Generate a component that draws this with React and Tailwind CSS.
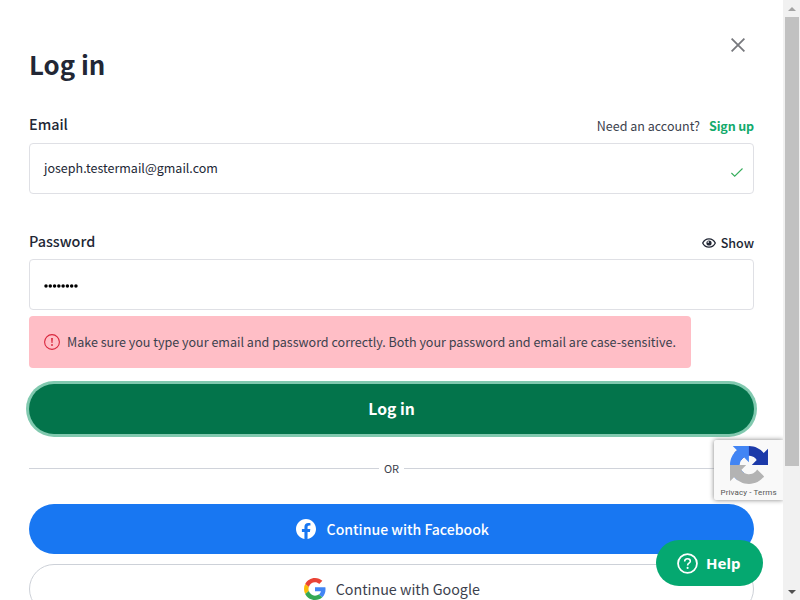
import React from "react";

function RecaptchaLogo() {
  return (
    <svg viewBox="0 0 64 64" className="block h-[38px] w-[38px]">
      <path fill="#1C3AA9" d="M64 31.955l-.033-1.37V4.687l-7.16 7.16C50.948 4.674 42.033.093 32.05.093c-10.4 0-19.622 4.96-25.458 12.64l11.736 11.86a15.55 15.55 0 0 1 4.754-5.334c2.05-1.6 4.952-2.906 8.968-2.906.485 0 .86.057 1.135.163 4.976.393 9.288 3.14 11.828 7.124l-8.307 8.307L64 31.953" />
      <path fill="#4285F4" d="M31.862.094l-1.37.033H4.594l7.16 7.16C4.58 13.147 0 22.06 0 32.046c0 10.4 4.96 19.622 12.64 25.458L24.5 45.768a15.55 15.55 0 0 1-5.334-4.754c-1.6-2.05-2.906-4.952-2.906-8.968 0-.485.057-.86.163-1.135.393-4.976 3.14-9.288 7.124-11.828l8.307 8.307L31.86.095" />
      <path fill="#B3B3B3" d="M.001 32.045l.033 1.37v25.898l7.16-7.16c5.86 7.173 14.774 11.754 24.76 11.754 10.4 0 19.622-4.96 25.458-12.64l-11.736-11.86a15.55 15.55 0 0 1-4.754 5.334c-2.05 1.6-4.952 2.906-8.968 2.906-.485 0-.86-.057-1.135-.163-4.976-.393-9.288-3.14-11.828-7.124l8.307-8.307c-10.522.04-22.4.066-27.295-.005" />
    </svg>
  );
}

function GoogleLogo() {
  return (
    <svg viewBox="0 0 48 48" className="block h-[22px] w-[22px]">
      <path fill="#EA4335" d="M24 9.5c3.54 0 6.71 1.22 9.21 3.6l6.85-6.85C35.9 2.38 30.47 0 24 0 14.62 0 6.51 5.38 2.56 13.22l7.98 6.19C12.43 13.72 17.74 9.5 24 9.5z" />
      <path fill="#4285F4" d="M46.98 24.55c0-1.57-.15-3.09-.38-4.55H24v9.02h12.94c-.58 2.96-2.26 5.48-4.78 7.18l7.73 6c4.51-4.18 7.09-10.36 7.09-17.65z" />
      <path fill="#FBBC05" d="M10.53 28.59c-.48-1.45-.76-2.99-.76-4.59s.27-3.14.76-4.59l-7.98-6.19C.92 16.46 0 20.12 0 24c0 3.88.92 7.54 2.56 10.78l7.97-6.19z" />
      <path fill="#34A853" d="M24 48c6.48 0 11.93-2.13 15.89-5.81l-7.73-6c-2.15 1.45-4.92 2.3-8.16 2.3-6.26 0-11.57-4.22-13.47-9.91l-7.98 6.19C6.51 42.62 14.62 48 24 48z" />
    </svg>
  );
}

function Scrollbar() {
  return (
    <div className="flex w-[17px] shrink-0 flex-col items-center bg-[#f1f1f1]">
      <div className="flex h-[17px] items-center">
        <svg viewBox="0 0 8 4" className="h-1 w-2"><path d="M4 0L8 4H0z" fill="#a3a3a3" /></svg>
      </div>
      <div className="h-[449px] w-[14px] bg-[#c1c1c1]" />
      <div className="mt-auto flex h-[17px] items-center">
        <svg viewBox="0 0 8 4" className="h-1 w-2"><path d="M0 0H8L4 4z" fill="#505050" /></svg>
      </div>
    </div>
  );
}

export default function App() {
  return (
    <div className="relative flex h-[600px] w-[800px] overflow-hidden bg-white font-['Noto_Sans_CJK_SC',sans-serif] text-[#222735]">
      <main className="flex h-[640px] min-w-0 flex-1 flex-col px-[29px]">
        <header className="flex h-[114px] items-start justify-between">
          <h1 className="mt-[44px] text-[25.8px] leading-[40px] font-bold">Log in</h1>
          <svg viewBox="0 0 14 14" className="mt-[38px] mr-[8.6px] h-3.5 w-3.5">
            <path d="M.6.6l12.8 12.8M13.4.6L.6 13.4" stroke="#77787d" strokeWidth="1.8" fill="none" />
          </svg>
        </header>

        <div className="flex h-[29px] items-start justify-between">
          <label className="text-[14.4px] leading-5 font-medium">Email</label>
          <div className="mt-0.5 flex gap-[9px] text-[12.5px] leading-5">
            <span className="text-[#3c414d]">Need an account?</span>
            <a className="font-bold tracking-[-0.13px] text-[#13aa6c]">Sign up</a>
          </div>
        </div>
        <div className="flex h-[51px] shrink-0 items-center justify-between rounded-[4px] border border-[#dfe0e5] pr-[10.5px] pl-3.5">
          <span className="-mt-0.5 text-[12.5px] leading-5">joseph.testermail@gmail.com</span>
          <svg viewBox="0 0 12 9" className="mt-2 h-[9px] w-3">
            <path d="M.4 5l3.3 3.2L11.5.5" stroke="#36ad5c" strokeWidth="1.1" fill="none" />
          </svg>
        </div>

        <div className="mt-[37px] flex h-7 items-start justify-between">
          <label className="text-[14.4px] leading-5 font-medium">Password</label>
          <div className="mt-0.5 flex items-center gap-[5px] text-[12.5px] leading-5 font-medium">
            <svg viewBox="0 0 14 10" className="h-2.5 w-3.5">
              <path d="M.7 5C2 2.2 4.2.8 7 .8S12 2.2 13.3 5C12 7.8 9.8 9.2 7 9.2S2 7.8.7 5z" fill="none" stroke="#222735" strokeWidth="1.3" />
              <circle cx="7" cy="5" r="2.6" fill="#222735" />
              <circle cx="6.2" cy="4.1" r=".8" fill="#fff" />
            </svg>
            <span>Show</span>
          </div>
        </div>
        <div className="flex h-[51px] shrink-0 items-center rounded-[4px] border border-[#dfe0e5] px-3.5">
          <svg viewBox="0 0 36 4" className="mt-[3px] h-1 w-9">
            {Array.from({ length: 8 }, (_, i) => (
              <circle key={i} cx={2 + i * 4.28} cy="2" r="1.75" fill="#000" />
            ))}
          </svg>
        </div>

        <div className="mt-1.5 flex h-[52px] w-[661.5px] shrink-0 items-center gap-[7px] rounded-[4px] bg-[#ffbec6] pl-[15px]">
          <svg viewBox="0 0 16 16" className="h-4 w-4 shrink-0">
            <circle cx="8" cy="8" r="7.4" fill="none" stroke="#d9263c" strokeWidth="1.1" />
            <path d="M7.1 4h1.8l-.4 5h-1z" fill="#d9263c" />
            <circle cx="8" cy="11" r=".95" fill="#d9263c" />
          </svg>
          <span className="text-[12.55px] leading-5 whitespace-nowrap text-[#3c414d]">
            Make sure you type your email and password correctly. Both your password and email are case-sensitive.
          </span>
        </div>

        <button className="mt-[15.5px] flex h-[50px] shrink-0 items-center justify-center rounded-full bg-[#03744b] text-[15.7px] leading-6 font-bold text-white ring-[3px] ring-[#81c9af]">
          Log in
        </button>

        <div className="mt-[24.5px] flex h-5 items-center gap-[5px] text-[11px] leading-5 text-[#3c414d]">
          <div className="h-px flex-1 bg-[#d0d3da]" />
          <span>OR</span>
          <div className="h-px flex-1 bg-[#d0d3da]" />
        </div>

        <button className="mt-[26px] flex h-[49.5px] shrink-0 items-center justify-center gap-[10.5px] rounded-full bg-[#1877f2] pl-[2px] text-[14.05px] leading-6 font-medium text-white">
          <svg viewBox="0 0 24 24" className="h-5 w-5">
            <path fill="#fff" d="M24 12.073C24 5.405 18.627 0 12 0S0 5.405 0 12.073C0 18.1 4.388 23.094 10.125 24v-8.437H7.078v-3.49h3.047V9.413c0-3.026 1.792-4.697 4.533-4.697 1.312 0 2.686.235 2.686.235v2.971H15.83c-1.491 0-1.956.93-1.956 1.886v2.265h3.328l-.532 3.49h-2.796V24C19.612 23.094 24 18.1 24 12.073z" />
          </svg>
          <span>Continue with Facebook</span>
        </button>
        <button className="mt-2.5 flex h-[50px] shrink-0 items-center justify-center gap-[9.5px] rounded-full border border-[#cdd1d8] pl-px text-[14.3px] leading-6 text-[#3c414d]">
          <GoogleLogo />
          <span>Continue with Google</span>
        </button>
      </main>
      <Scrollbar />

      <div className="absolute top-[440px] left-[714px] h-[60px] w-[69px] rounded-l-[2px] bg-[#f9f9f9] shadow-[0_0_5px_gray] [clip-path:inset(-8px_0_-8px_-8px)]">
        <div className="pt-1.5 pl-[15.5px]"><RecaptchaLogo /></div>
        <p className="mt-[3px] pl-[6.5px] font-['Roboto',sans-serif] text-[8px] leading-3 tracking-[0.12px] whitespace-nowrap text-[#555]">Privacy - Terms</p>
      </div>

      <button className="absolute top-[540px] left-[656px] flex h-[46px] w-[107px] items-center gap-2 rounded-full bg-[#05a870] pl-[21px] text-white">
        <svg viewBox="0 0 20 20" className="h-[21px] w-[21px]">
          <circle cx="10" cy="10" r="9" fill="none" stroke="#fff" strokeWidth="1.7" />
          <path d="M7.3 8c0-1.6 1.2-2.6 2.7-2.6s2.7 1 2.7 2.4c0 1.9-2.6 2-2.6 4" fill="none" stroke="#fff" strokeWidth="1.5" />
          <circle cx="10.1" cy="14.2" r="1" fill="#fff" />
        </svg>
        <span className="font-['Noto_Sans',sans-serif] text-[15px] leading-6 font-bold">Help</span>
      </button>
    </div>
  );
}
